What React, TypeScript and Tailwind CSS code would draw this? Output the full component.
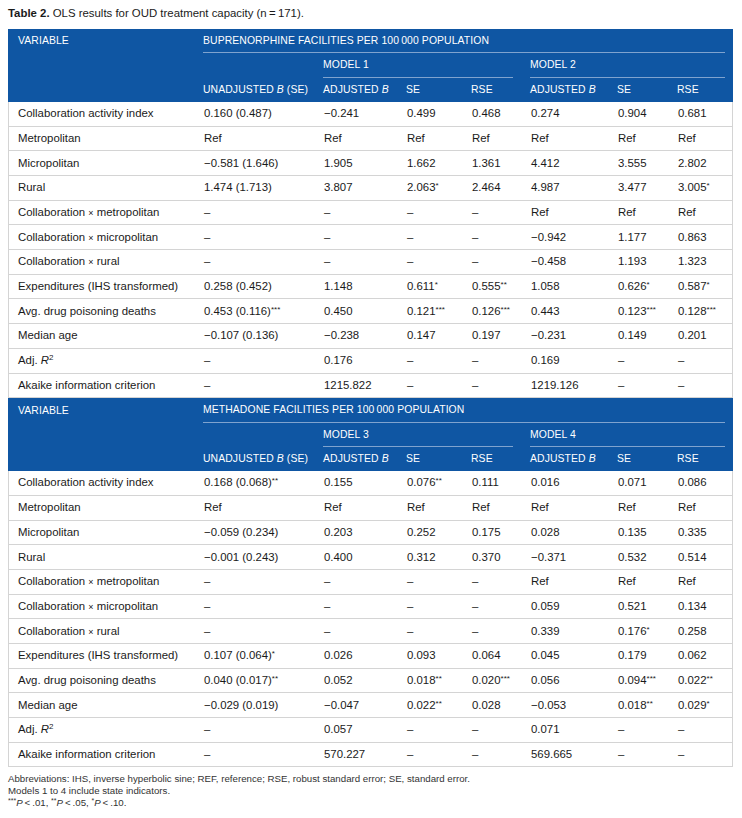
import React from "react";

const COLS = "grid grid-cols-[185px_120px_83px_65px_59px_87px_60px_66px]";

type Row = { label: React.ReactNode; cells: string[] };

const S = ({ children }: { children: React.ReactNode }) => (
  <span className="text-[8px] align-[3px] leading-none">{children}</span>
);

function Val({ v }: { v: string }) {
  const m = v.match(/^(.*?)(\*+)$/);
  if (m) {
    return (
      <>
        {m[1]}
        <S>{m[2]}</S>
      </>
    );
  }
  return <>{v}</>;
}

const X = <span className="text-[9px]">×</span>;
const D = "–";
const M = "−";

const adjR = (
  <>
    Adj. <i>R</i>
    <span className="text-[8px] align-[4px] leading-none">2</span>
  </>
);

const rows1: Row[] = [
  { label: "Collaboration activity index", cells: ["0.160 (0.487)", M + "0.241", "0.499", "0.468", "0.274", "0.904", "0.681"] },
  { label: "Metropolitan", cells: ["Ref", "Ref", "Ref", "Ref", "Ref", "Ref", "Ref"] },
  { label: "Micropolitan", cells: [M + "0.581 (1.646)", "1.905", "1.662", "1.361", "4.412", "3.555", "2.802"] },
  { label: "Rural", cells: ["1.474 (1.713)", "3.807", "2.063*", "2.464", "4.987", "3.477", "3.005*"] },
  { label: <>Collaboration {X} metropolitan</>, cells: [D, D, D, D, "Ref", "Ref", "Ref"] },
  { label: <>Collaboration {X} micropolitan</>, cells: [D, D, D, D, M + "0.942", "1.177", "0.863"] },
  { label: <>Collaboration {X} rural</>, cells: [D, D, D, D, M + "0.458", "1.193", "1.323"] },
  { label: "Expenditures (IHS transformed)", cells: ["0.258 (0.452)", "1.148", "0.611*", "0.555**", "1.058", "0.626*", "0.587*"] },
  { label: "Avg. drug poisoning deaths", cells: ["0.453 (0.116)***", "0.450", "0.121***", "0.126***", "0.443", "0.123***", "0.128***"] },
  { label: "Median age", cells: [M + "0.107 (0.136)", M + "0.238", "0.147", "0.197", M + "0.231", "0.149", "0.201"] },
  { label: adjR, cells: [D, "0.176", D, D, "0.169", D, D] },
  { label: "Akaike information criterion", cells: [D, "1215.822", D, D, "1219.126", D, D] },
];

const rows2: Row[] = [
  { label: "Collaboration activity index", cells: ["0.168 (0.068)**", "0.155", "0.076**", "0.111", "0.016", "0.071", "0.086"] },
  { label: "Metropolitan", cells: ["Ref", "Ref", "Ref", "Ref", "Ref", "Ref", "Ref"] },
  { label: "Micropolitan", cells: [M + "0.059 (0.234)", "0.203", "0.252", "0.175", "0.028", "0.135", "0.335"] },
  { label: "Rural", cells: [M + "0.001 (0.243)", "0.400", "0.312", "0.370", M + "0.371", "0.532", "0.514"] },
  { label: <>Collaboration {X} metropolitan</>, cells: [D, D, D, D, "Ref", "Ref", "Ref"] },
  { label: <>Collaboration {X} micropolitan</>, cells: [D, D, D, D, "0.059", "0.521", "0.134"] },
  { label: <>Collaboration {X} rural</>, cells: [D, D, D, D, "0.339", "0.176*", "0.258"] },
  { label: "Expenditures (IHS transformed)", cells: ["0.107 (0.064)*", "0.026", "0.093", "0.064", "0.045", "0.179", "0.062"] },
  { label: "Avg. drug poisoning deaths", cells: ["0.040 (0.017)**", "0.052", "0.018**", "0.020***", "0.056", "0.094***", "0.022**"] },
  { label: "Median age", cells: [M + "0.029 (0.019)", M + "0.047", "0.022**", "0.028", M + "0.053", "0.018**", "0.029*"] },
  { label: adjR, cells: [D, "0.057", D, D, "0.071", D, D] },
  { label: "Akaike information criterion", cells: [D, "570.227", D, D, "569.665", D, D] },
];

function Header({ title, m1, m2 }: { title: string; m1: string; m2: string }) {
  const line = "border-b border-[#7fa3cf]";
  return (
    <div className="bg-[#0f56a3] text-white text-[10.4px] tracking-[0.1px]">
      <div className={COLS}>
        <div className="h-[24.4px] flex items-center pl-[10px]">VARIABLE</div>
        <div className="col-span-7 pl-[10px] pr-[8px]">
          <div className={`h-[24.4px] flex items-center ${line}`}>{title}</div>
        </div>
      </div>
      <div className={COLS}>
        <div />
        <div />
        <div className="col-span-3 pl-[10px] pr-[7px]">
          <div className={`h-[24.4px] flex items-center ${line}`}>{m1}</div>
        </div>
        <div className="col-span-3 pl-[10px] pr-[8px]">
          <div className={`h-[24.4px] flex items-center ${line}`}>{m2}</div>
        </div>
      </div>
      <div className={`${COLS} h-[24.2px] items-center`}>
        <div />
        <div className="pl-[10px]">
          UNADJUSTED <i>B</i> (SE)
        </div>
        <div className="pl-[10px]">
          ADJUSTED <i>B</i>
        </div>
        <div className="pl-[10px]">SE</div>
        <div className="pl-[10px]">RSE</div>
        <div className="pl-[10px]">
          ADJUSTED <i>B</i>
        </div>
        <div className="pl-[10px]">SE</div>
        <div className="pl-[10px]">RSE</div>
      </div>
    </div>
  );
}

function Body({ rows }: { rows: Row[] }) {
  return (
    <div className="border-x border-[#d4d4d4]">
      {rows.map((r, i) => (
        <div key={i} className={`${COLS} h-[24.7px] items-center border-b border-[#d4d4d4]`}>
          <div className="pl-[9px] whitespace-nowrap">{r.label}</div>
          {r.cells.map((c, j) => (
            <div key={j} className="pl-[10px] whitespace-nowrap">
              <Val v={c} />
            </div>
          ))}
        </div>
      ))}
    </div>
  );
}

const FS = ({ children }: { children: React.ReactNode }) => (
  <span className="text-[7px] align-[3px] leading-none">{children}</span>
);

export default function App() {
  return (
    <div
      className="bg-white w-[742px] min-h-[818px] px-2 pt-[6px] text-[#1a1a1a]"
      style={{ fontFamily: '"Liberation Sans", Arial, Helvetica, sans-serif' }}
    >
      <div className="text-[11.4px] leading-[14px] h-[23px]">
        <b>Table 2.</b> OLS results for OUD treatment capacity (n{"\u2009"}={"\u2009"}171).
      </div>
      <div className="w-[725px] text-[11.4px]">
        <Header title={"BUPRENORPHINE FACILITIES PER 100\u2009000 POPULATION"} m1="MODEL 1" m2="MODEL 2" />
        <Body rows={rows1} />
        <Header title={"METHADONE FACILITIES PER 100\u2009000 POPULATION"} m1="MODEL 3" m2="MODEL 4" />
        <Body rows={rows2} />
      </div>
      <div className="text-[9.7px] leading-[12px] text-[#333] mt-[6px]">
        <div>
          Abbreviations: IHS, inverse hyperbolic sine; REF, reference; RSE, robust standard error; SE, standard error.
        </div>
        <div>Models 1 to 4 include state indicators.</div>
        <div>
          <FS>***</FS>
          <i>P</i>{"\u2009"}&lt;{"\u2009"}.01, <FS>**</FS>
          <i>P</i>{"\u2009"}&lt;{"\u2009"}.05, <FS>*</FS>
          <i>P</i>{"\u2009"}&lt;{"\u2009"}.10.
        </div>
      </div>
    </div>
  );
}
